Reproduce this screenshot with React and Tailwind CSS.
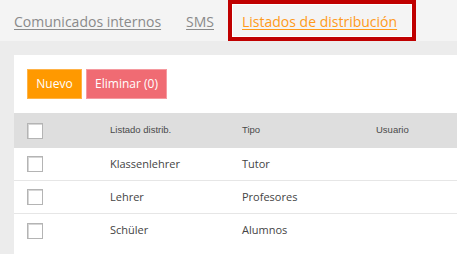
const rows = [
  { name: 'Klassenlehrer', type: 'Tutor' },
  { name: 'Lehrer', type: 'Profesores' },
  { name: 'Schüler', type: 'Alumnos' },
]

function Checkbox() {
  return (
    <span className="block w-4 h-4 border border-[#b4b4b4] bg-white shadow-[inset_1px_1px_0_#d6d6d6]" />
  )
}

export default function App() {
  return (
    <div className="w-[457px] h-[254px] overflow-hidden bg-[#ececec] font-['Open_Sans',sans-serif]">
      <div className="h-[41px] bg-[#f4f4f4] flex items-stretch pl-[14px] text-[14px]">
        <a className="self-center pt-[2px] text-[#8a8a8a] underline underline-offset-2">Comunicados internos</a>
        <a className="self-center pt-[2px] ml-[25px] text-[#8a8a8a] underline underline-offset-2">SMS</a>
        <div className="ml-[14px] w-[188px] h-[41px] border-4 border-[#c00000] flex">
          <div className="flex-1 flex items-center pl-[9px] pt-[2px] border border-white">
            <a className="text-[#ff9a1a] underline underline-offset-2">Listados de distribución</a>
          </div>
        </div>
      </div>
      <div className="pl-[14px] pt-[14px]">
        <div className="bg-white h-[200px]">
          <div className="flex gap-[4px] pl-[13px] pt-[14px] pb-[14px] text-[12px] text-white">
            <button className="w-[55px] h-[30px] bg-[#ff9900] border border-[#ffb347]">Nuevo</button>
            <button className="w-[81px] h-[30px] bg-[#f06b73] border border-[#f59aa0]">Eliminar (0)</button>
          </div>
          <div className="flex items-center h-[35px] bg-[#dedede] text-[9.5px] text-[#4a4a4a] font-['Liberation_Sans',sans-serif]">
            <div className="w-[96px] pl-[13px]"><Checkbox /></div>
            <div className="w-[132px]">Listado distrib.</div>
            <div className="w-[134px]">Tipo</div>
            <div>Usuario</div>
          </div>
          {rows.map((r, i) => (
            <div key={r.name} className={`flex items-center h-[33px] text-[11px] text-[#444] ${i < 2 ? 'border-b border-[#e6e6e6]' : ''}`}>
              <div className="w-[96px] pl-[13px]"><Checkbox /></div>
              <div className="w-[132px]">{r.name}</div>
              <div className="w-[134px]">{r.type}</div>
              <div />
            </div>
          ))}
        </div>
      </div>
    </div>
  )
}
